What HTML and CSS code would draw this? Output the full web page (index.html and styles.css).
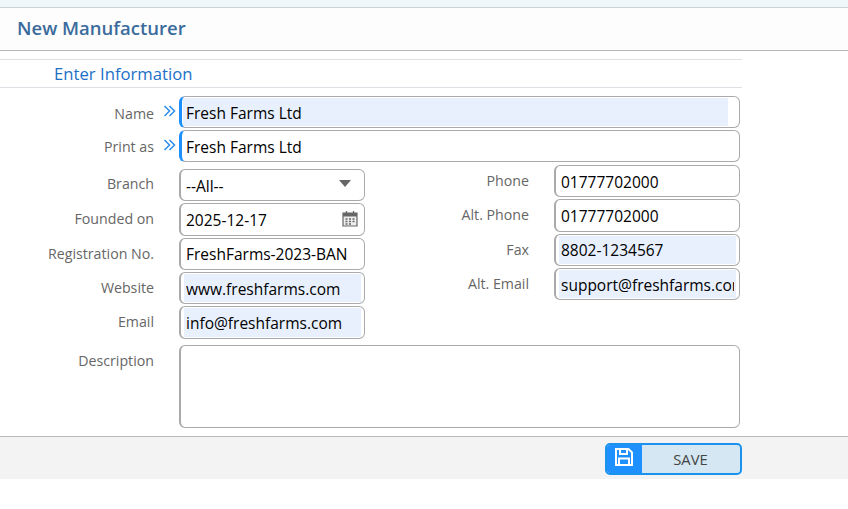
FILE: index.html
```html
<!DOCTYPE html>
<html lang="en">
<head>
<meta charset="utf-8">
<title>New Manufacturer</title>
<link rel="stylesheet" href="styles.css">
</head>
<body>
<div class="strip"></div>
<header class="head"><h1 class="title">New Manufacturer</h1></header>
<div class="section"><h2 class="section-title">Enter Information</h2></div>
<form class="form">
  <div class="wide-rows">
    <div class="row">
      <label class="label">Name</label>
      <svg class="req" viewBox="0 0 13 12"><path d="M1.500 1l5 5-5 5M6.500 1l5 5-5 5"/></svg>
      <div class="field wide required"><input class="inp fill long" value="Fresh Farms Ltd"></div>
    </div>
    <div class="row">
      <label class="label print">Print as</label>
      <svg class="req" viewBox="0 0 13 12"><path d="M1.500 1l5 5-5 5M6.500 1l5 5-5 5"/></svg>
      <div class="field wide required"><input class="inp" value="Fresh Farms Ltd"></div>
    </div>
  </div>
  <div class="cols">
    <div class="col col-left">
      <div class="row"><label class="label up first">Branch</label><div class="field narrow select"><span class="val">--All--</span><span class="caret"></span></div></div>
      <div class="row"><label class="label up">Founded on</label><div class="field narrow over">
        <input class="inp" value="2025-12-17">
        <svg class="cal" viewBox="0 0 16 17"><path class="cal-body" d="M1 3h14v13H1z"/><path class="cal-top" d="M1 3h14v3.500H1z"/><path class="cal-pins" d="M4.500 1v3.500M11.500 1v3.500"/><path class="cal-dots" d="M3.500 9h2M7 9h2M10.500 9h2M3.500 11.500h2M7 11.500h2M10.500 11.500h2M3.500 14h2M7 14h2"/></svg>
      </div></div>
      <div class="row"><label class="label up">Registration No.</label><div class="field narrow"><input class="inp" value="FreshFarms-2023-BAN"></div></div>
      <div class="row"><label class="label up">Website</label><div class="field narrow"><input class="inp fill" value="www.freshfarms.com"></div></div>
      <div class="row"><label class="label up">Email</label><div class="field narrow"><input class="inp fill" value="info@freshfarms.com"></div></div>
    </div>
    <div class="col col-right">
      <div class="row"><label class="label r up">Phone</label><div class="field narrow"><input class="inp" value="01777702000"></div></div>
      <div class="row"><label class="label r up">Alt. Phone</label><div class="field narrow"><input class="inp" value="01777702000"></div></div>
      <div class="row"><label class="label r up">Fax</label><div class="field narrow"><input class="inp fill" value="8802-1234567"></div></div>
      <div class="row"><label class="label r up">Alt. Email</label><div class="field narrow"><input class="inp fill" value="support@freshfarms.com"></div></div>
    </div>
  </div>
  <div class="row row-desc">
    <label class="label desc-label">Description</label>
    <div class="field desc"></div>
  </div>
</form>
<footer class="foot">
  <button type="button" class="save">
    <span class="save-icon"><svg viewBox="0 0 18 18"><path class="disk" d="M1 1h12.500L17 4.500V17H1z"/><path class="disk" d="M5 1v5h7V1M4 17v-6.500h10V17"/></svg></span>
    <span class="save-text">SAVE</span>
  </button>
</footer>
</body>
</html>
```
FILE: styles.css
```css
* { box-sizing: border-box; }
html, body { margin: 0; padding: 0; background: #fff; }
body { font-family: "Open Sans", "Noto Sans", sans-serif; height: 509px; overflow: hidden; }
.strip { height: 8px; background: #eef7fa; border-bottom: 1px solid #cdd3d6; }
.head { height: 43px; background: #fdfdfd; border-bottom: 1px solid #b6b6b6; padding: 0 0 3px 17px; display: flex; align-items: center; }
.title { margin: 0; font-size: 18.500px; font-weight: 600; color: #3a6b9c; }
.section { margin-top: 8px; width: 742px; height: 29px; border-top: 1px solid #dfdfe6; border-bottom: 1px solid #dfdfe6; padding-left: 54px; display: flex; align-items: center; }
.section-title { margin: 0; font-size: 16.700px; font-weight: 400; color: #1c70c8; }
.form { padding-top: 8px; }
.wide-rows { display: flex; flex-direction: column; gap: 2px; }
.row { display: flex; align-items: center; }
.label { width: 155px; flex: none; text-align: right; font-size: 14.200px; color: #666; padding: 2px 1px 0 0; }
.label.print { padding-top: 0; }
.label.up { padding-top: 0; margin-top: -1.500px; }
.label.up.first { margin-top: -3px; }
.label.r { width: 105px; padding-right: 0; }
.req { width: 13px; height: 12px; margin: -3px 3px 0 8px; flex: none; }
.req path { fill: none; stroke: #2b8ef0; stroke-width: 1.500; }
.field { height: 32.330px; border: 1px solid #aaa; border-left-width: 2px; border-radius: 6px; background: #fff; display: flex; padding: 1px 3px; flex: none; }
.wide { width: 561px; height: 32px; }
.narrow { width: 186px; }
.required { border-left: 3px solid #1e8fff; padding-left: 1px; padding-right: 0; }
.inp { border: 0; outline: 0; margin: 0; width: 100%; height: 100%; padding: 1px 2px 0; background: transparent; font: 400 15.500px "Open Sans", "Noto Sans", sans-serif; color: #000; min-width: 0; }
.required .inp { padding-left: 3px; }
.fill { background: #e8f0fe; }
.long { margin-right: 11px; }
.cols { display: flex; margin-top: 3px; }
.col { display: flex; flex-direction: column; gap: 2px; }
.col-left { padding-top: 4px; width: 365px; }
.col-left .field { margin-left: 24px; }
.col-right { padding-left: 59px; }
.col-right .field { margin-left: 25px; }
.select { align-items: center; justify-content: space-between; padding: 1px 13px 0 5px; position: relative; }
.val { font-size: 15.500px; color: #000; }
.caret { width: 0; height: 0; border-left: 6.500px solid transparent; border-right: 6.500px solid transparent; border-top: 7px solid #666; margin-top: -5px; }
.over { position: relative; }
.cal { position: absolute; right: 6px; top: 6px; width: 16px; height: 17px; }
.cal-body { fill: #eee; stroke: #666; stroke-width: 1.200; }
.cal-top { fill: #666; }
.cal-pins { stroke: #666; stroke-width: 1.300; }
.cal-dots { stroke: #666; stroke-width: 1.300; }
.row-desc { align-items: flex-start; margin-top: 6px; }
.desc-label { padding-top: 6px; }
.row-desc .field.desc { width: 561px; height: 83px; margin-left: 24px; }
.foot { margin-top: 8px; height: 43px; background: #f3f3f3; border-top: 1px solid #b9b9b9; padding: 6px 106px 0 0; display: flex; justify-content: flex-end; align-items: flex-start; }
.save { width: 137px; height: 32px; padding: 0; border: 2px solid #1b93ee; border-radius: 5px; background: #d5e7f3; display: flex; overflow: hidden; font: 400 14.800px "Open Sans", "Noto Sans", sans-serif; color: #444; }
.save-icon { width: 35px; height: 100%; background: #1e90ff; flex: none; display: flex; justify-content: flex-start; padding: 3px 0 0 8px; }
.save-icon svg { width: 18px; height: 18px; }
.disk { fill: none; stroke: #fff; stroke-width: 2; }
.save-text { flex: 1; text-align: center; line-height: 28px; margin-left: -1px; }
```
